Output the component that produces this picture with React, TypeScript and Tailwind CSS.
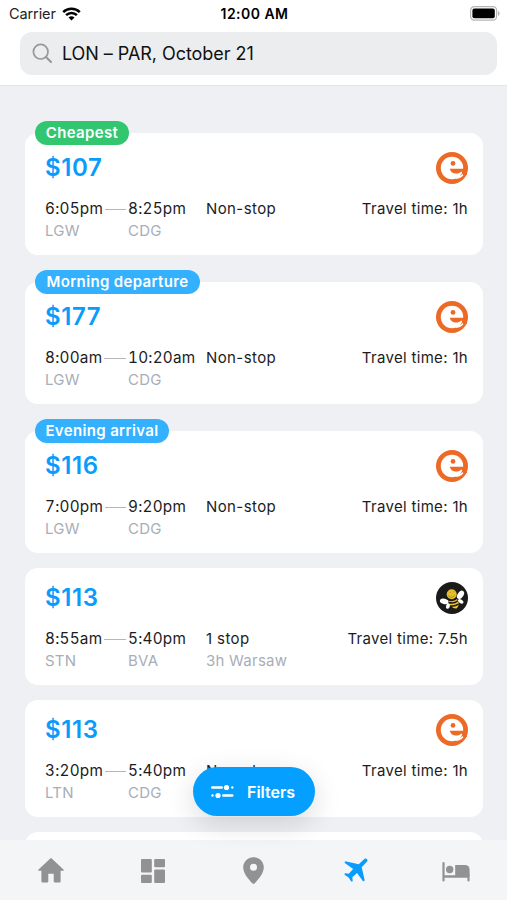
type Flight = {
    price: string;
    depart: string;
    from: string;
    arrive: string;
    to: string;
    stops: string;
    layover?: string;
    duration: string;
    airline: "easyjet" | "bee";
    badge?: string;
    badgeColor?: string;
}

const flights: Flight[] = [
    { price: "$107", depart: "6:05pm", from: "LGW", arrive: "8:25pm", to: "CDG", stops: "Non-stop", duration: "1h", airline: "easyjet", badge: "Cheapest", badgeColor: "bg-[#32c671] w-[94px]" },
    { price: "$177", depart: "8:00am", from: "LGW", arrive: "10:20am", to: "CDG", stops: "Non-stop", duration: "1h", airline: "easyjet", badge: "Morning departure", badgeColor: "bg-[#33b1ff] w-[165px]" },
    { price: "$116", depart: "7:00pm", from: "LGW", arrive: "9:20pm", to: "CDG", stops: "Non-stop", duration: "1h", airline: "easyjet", badge: "Evening arrival", badgeColor: "bg-[#33b1ff] w-[134px]" },
    { price: "$113", depart: "8:55am", from: "STN", arrive: "5:40pm", to: "BVA", stops: "1 stop", layover: "3h Warsaw", duration: "7.5h", airline: "bee" },
    { price: "$113", depart: "3:20pm", from: "LTN", arrive: "5:40pm", to: "CDG", stops: "Non-stop", duration: "1h", airline: "easyjet" },
]

function StatusBar() {
    return (
        <div className="grid h-[27px] grid-cols-3 items-center pl-[9px] pr-[7px] text-black">
            <div className="flex items-center gap-[6px]">
                <span className="text-[14.5px] tracking-[-0.1px] text-[#222]">Carrier</span>
                <svg width="19" height="14" viewBox="0 0 19 14" fill="none" stroke="#000" strokeWidth="2.5">
                    <path d="M1.2 5.2a11.8 11.8 0 0 1 16.6 0" />
                    <path d="M4.1 8.2a7.6 7.6 0 0 1 10.8 0" />
                    <path d="M9.5 13.6L6.5 10.6a4.3 4.3 0 0 1 6 0z" fill="#000" stroke="none" />
                </svg>
            </div>
            <span className="text-center text-[14px] font-semibold tracking-[0.45px]">12:00 AM</span>
            <svg className="justify-self-end" width="30" height="15" viewBox="0 0 30 15">
                <rect x="0.6" y="0.7" width="26" height="13.4" rx="3.6" fill="#fff" stroke="#b5b5b5" strokeWidth="1.2" />
                <rect x="2.4" y="2.5" width="22.4" height="9.8" rx="2" fill="#000" />
                <path d="M28 5v5c1-.4 1.6-1.4 1.6-2.5S29 5.4 28 5z" fill="#b5b5b5" />
            </svg>
        </div>
    )
}

function SearchField() {
    return (
        <div className="ml-5 mr-[10px] mt-[5px] flex h-[43px] items-center rounded-[12px] bg-[#ecedef] pl-3">
            <svg width="21" height="21" viewBox="0 0 21 21" fill="none" stroke="#98989b" strokeWidth="1.7" strokeLinecap="round">
                <circle cx="8.7" cy="8.7" r="7.3" />
                <path d="M14 14l5 5" strokeWidth="2.1" />
            </svg>
            <span className="ml-[9px] text-[18px] tracking-[-0.05px] text-[#111]">LON – PAR, October 21</span>
        </div>
    )
}

function EasyLogo() {
    return (
        <svg width="32" height="32" viewBox="0 0 32 32">
            <circle cx="16" cy="16" r="16" fill="#ec6a25" />
            <circle cx="16" cy="16" r="11.2" fill="#fff" />
            <circle cx="17" cy="11.4" r="2.4" fill="#ec6a25" />
            <path d="M13.8 16.8H31V23L26.500 22.800C26.500 21.500 26.200 20.500 25.600 19.500C24 20.800 21.600 21.900 19 21.500C16.200 21.100 14.300 19.500 13.800 16.800z" fill="#ec6a25" />
            <path d="M19.500 24.900C22.500 24.800 24.900 23.500 26.700 21.900L27.300 23.200C25.600 25.300 23.300 26.600 20.500 27z" fill="#fff" />
        </svg>
    )
}

function BeeLogo() {
    return (
        <svg width="32" height="32" viewBox="0 0 32 32">
            <circle cx="16" cy="16" r="16" fill="#1a1a1a" />
            <g fill="#fff">
                <ellipse cx="24.5" cy="12.8" rx="2.9" ry="4.6" transform="rotate(35 24.5 12.8)" />
                <ellipse cx="24.7" cy="19.4" rx="3" ry="1.9" transform="rotate(28 24.7 19.4)" />
                <ellipse cx="8.2" cy="19.4" rx="4.4" ry="2.7" transform="rotate(14 8.2 19.4)" />
                <ellipse cx="12" cy="24" rx="1.9" ry="2.8" transform="rotate(18 12 24)" />
            </g>
            <path d="M12.5 18.5c2.5 1.5 6.5.5 8.5-1.5 2.2 3.6 2.4 7-.5 9.500-3.700.5-7.300-3.500-8-8z" fill="#f1c62b" />
            <path d="M13 20.500c3 1 6.500.3 8.900-1.800M15 23.800c2.800.6 5.200-.2 7.400-1.700" stroke="#1a1a1a" strokeWidth="1.4" fill="none" />
            <circle cx="15.700" cy="12.300" r="5" fill="#e8bd2c" />
            <path d="M12.500 13.500c1.500 2.300 4.500 2.300 6.200-.2M13.800 10.500h.8M17.400 9.800h.8" stroke="#a58a2c" strokeWidth="1" fill="none" />
        </svg>
    )
}

function FlightCard({ flight }: { flight: Flight }) {
    return (
        <div className={`relative shrink-0 rounded-[13px] bg-white px-5 ${flight.badge ? "h-[122px] pt-[19px]" : "h-[117px] pt-[14px]"}`}>
            {flight.badge && (
                <div className={`absolute -top-3 left-[10px] flex h-6 items-center justify-center whitespace-nowrap rounded-full pt-px text-[15px] font-semibold tracking-[0.35px] text-white ${flight.badgeColor}`}>
                    {flight.badge}
                </div>
            )}
            <div className="flex h-8 items-center justify-between">
                <span className="text-[24px] font-semibold tracking-[0.6px] text-[#0a9cfb]">{flight.price}</span>
                <div className="-mr-[5px]">
                    {flight.airline === "bee" ? <BeeLogo /> : <EasyLogo />}
                </div>
            </div>
            <div className="-mr-[5px] mt-[14px] flex text-[15px] leading-[22px] tracking-[0.25px] text-[#1c1c1e]">
                <div className="w-[83px]">
                    <div className="flex items-center gap-[2px] pr-[2px]">
                        <span className="text-[15.3px] tabular-nums">{flight.depart}</span>
                        <span className="h-px flex-1 bg-[#b4b6ba]"></span>
                    </div>
                    <div className="text-[#a8aeb7]">{flight.from}</div>
                </div>
                <div className="w-[78px]">
                    <div className="text-[15.3px] tabular-nums">{flight.arrive}</div>
                    <div className="text-[#a8aeb7]">{flight.to}</div>
                </div>
                <div>
                    <div className="tracking-[0.4px]">{flight.stops}</div>
                    <div className="text-[#a8aeb7]">{flight.layover}</div>
                </div>
                <div className="ml-auto tracking-[0.32px]">Travel time: {flight.duration}</div>
            </div>
        </div>
    )
}

function HomeIcon() {
    return (
        <svg width="26" height="25" viewBox="0 0 26 25" fill="currentColor">
            <path d="M12.300.4a1 1 0 0 1 1.400 0L25.500 11.600c.5.500.3 1.200-.4 1.200H22.600V23.400a1 1 0 0 1-1 1H16.500a.8.8 0 0 1-.8-.8V15.700H10.300V23.600a.8.8 0 0 1-.8.8H4.400a1 1 0 0 1-1-1V12.800H.9c-.7 0-.9-.7-.4-1.200z" />
        </svg>
    )
}

function DashboardIcon() {
    return (
        <svg width="24" height="24" viewBox="0 0 24 24" fill="currentColor">
            <rect x="0" y="0" width="10.800" height="13.400" rx="1" />
            <rect x="0" y="15.800" width="10.800" height="8.200" rx="1" />
            <rect x="13.200" y="0" width="10.800" height="8.200" rx="1" />
            <rect x="13.200" y="10.600" width="10.800" height="13.400" rx="1" />
        </svg>
    )
}

function PinIcon() {
    return (
        <svg width="21" height="27" viewBox="0 0 21 27" fill="currentColor">
            <path fillRule="evenodd" d="M10.500.2C4.700.2.2 4.700.2 10.300c0 5.700 4.800 11.500 9 15.900.8.800 1.800.8 2.600 0 4.200-4.400 9-10.200 9-15.900C20.800 4.700 16.300.2 10.500.2zm0 6.500a3.500 3.500 0 1 1 0 7 3.500 3.500 0 0 1 0-7z" />
        </svg>
    )
}

function PlaneIcon() {
    return (
        <svg width="24" height="24" viewBox="0 0 24 24" fill="#0a9cfb">
            <path d="M20.400.9c1.700-1.300 4 1 2.700 2.700L17.700 9.300l2.900 12.400c.1.500 0 .9-.4 1.300-.5.500-1.200.4-1.500-.2L13 14.900l-4.700 4.300.4 3.200c0 .3-.1.600-.3.800-.5.500-1.200.4-1.500-.2L4.600 19.400 1 17.100c-.6-.3-.7-1-.2-1.500.2-.2.500-.3.800-.3l3.200.4L9.100 11 1.200 5.300C.6 5 .5 4.300 1 3.800c.4-.4.800-.5 1.300-.4l12.400 2.900z" />
        </svg>
    )
}

function BedIcon() {
    return (
        <svg width="28" height="20" viewBox="0 0 28 20" fill="currentColor">
            <path d="M.4 1.200a1.100 1.100 0 0 1 2.200 0V13.300h22.800v-1h2.200v6.200a1.100 1.100 0 0 1-2.200 0V15.700H2.600v2.800a1.100 1.100 0 0 1-2.200 0z" />
            <circle cx="7.700" cy="7.500" r="3.700" />
            <path d="M13.200 3h9.800a4.600 4.600 0 0 1 4.600 4.600V14H13.200z" />
        </svg>
    )
}

function TabBar() {
    return (
        <nav className="grid h-[60px] shrink-0 grid-cols-5 items-center justify-items-center bg-[#f3f5f7] text-[#929294]">
            <HomeIcon />
            <div className="ml-[2px] mt-px"><DashboardIcon /></div>
            <div className="mt-px"><PinIcon /></div>
            <div className="ml-[3px]"><PlaneIcon /></div>
            <div className="mt-[3px]"><BedIcon /></div>
        </nav>
    )
}

export default function App() {
    return (
        <div className="relative flex h-[900px] w-[507px] flex-col overflow-hidden bg-[#eff0f4] font-['Inter',sans-serif]">
            <header className="h-[86px] shrink-0 border-b border-[#e3e4e7] bg-white">
                <StatusBar />
                <SearchField />
            </header>
            <main className="flex min-h-0 flex-1 flex-col overflow-hidden pl-[25px] pr-6 pt-[47px]">
                {flights.map((flight, i) => (
                    <div key={i} className={flights[i + 1]?.badge ? "mb-[27px]" : "mb-[15px]"}>
                        <FlightCard flight={flight} />
                    </div>
                ))}
                <div className="h-[117px] shrink-0 rounded-[13px] bg-white"></div>
            </main>
            <button className="absolute left-[193px] top-[767px] flex h-[49px] w-[122px] items-center rounded-full bg-[#05a0ff] pl-[18px] text-[16px] font-semibold text-white shadow-[0_8px_28px_rgba(0,0,0,0.14)]">
                <svg width="23" height="15" viewBox="0 0 23 15" fill="#fff">
                    <rect x="0" y="2.300" width="12" height="2.400" rx="1.200" />
                    <circle cx="15.500" cy="3.500" r="2.600" />
                    <circle cx="21.300" cy="3.500" r="1.200" />
                    <circle cx="1.500" cy="11.500" r="1.200" />
                    <circle cx="7" cy="11.500" r="2.600" />
                    <rect x="11" y="10.300" width="11.500" height="2.400" rx="1.200" />
                </svg>
                <span className="ml-[13px]">Filters</span>
            </button>
            <TabBar />
        </div>
    )
}
